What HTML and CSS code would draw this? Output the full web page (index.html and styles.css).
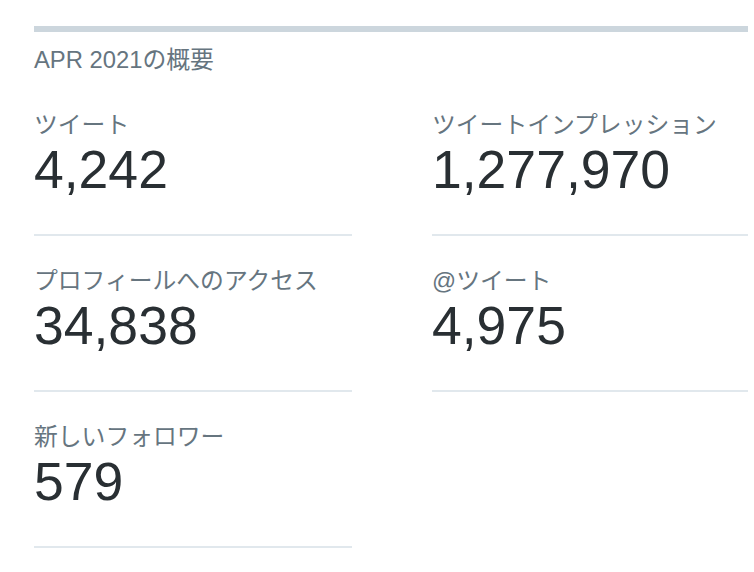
FILE: index.html
```html
<!DOCTYPE html>
<html lang="ja">
<head>
<meta charset="utf-8">
<title>APR 2021の概要</title>
<link rel="stylesheet" href="styles.css">
</head>
<body>
<section class="summary">
  <div class="bar"></div>
  <h2 class="title">APR 2021の概要</h2>
  <div class="grid">
    <div class="cell">
      <div class="label">ツイート</div>
      <div class="value">4,242</div>
    </div>
    <div class="cell">
      <div class="label">ツイートインプレッション</div>
      <div class="value">1,277,970</div>
    </div>
    <div class="cell">
      <div class="label">プロフィールへのアクセス</div>
      <div class="value">34,838</div>
    </div>
    <div class="cell">
      <div class="label">@ツイート</div>
      <div class="value">4,975</div>
    </div>
    <div class="cell">
      <div class="label">新しいフォロワー</div>
      <div class="value">579</div>
    </div>
  </div>
</section>
</body>
</html>
```

FILE: styles.css
```css
html, body {
  margin: 0;
  padding: 0;
  background: #ffffff;
}

body {
  font-family: "Liberation Sans", "Noto Sans CJK JP", sans-serif;
  width: 754px;
  height: 572px;
  overflow: hidden;
}

.summary {
  padding: 26px 6px 0 34px;
}

.bar {
  height: 6px;
  background: #ccd6dd;
}

.title {
  margin: 14px 0 6px;
  font-size: 23.8px;
  line-height: 28px;
  font-weight: normal;
  color: #66757f;
}

.grid {
  display: grid;
  grid-template-columns: 318px 316px;
  column-gap: 80px;
}

.cell {
  padding: 30px 0 34px;
  border-bottom: 2px solid #e1e8ed;
}

.label {
  font-size: 23.8px;
  line-height: 30px;
  color: #66757f;
}

.value {
  font-size: 53.5px;
  line-height: 60px;
  color: #292f33;
}
```
